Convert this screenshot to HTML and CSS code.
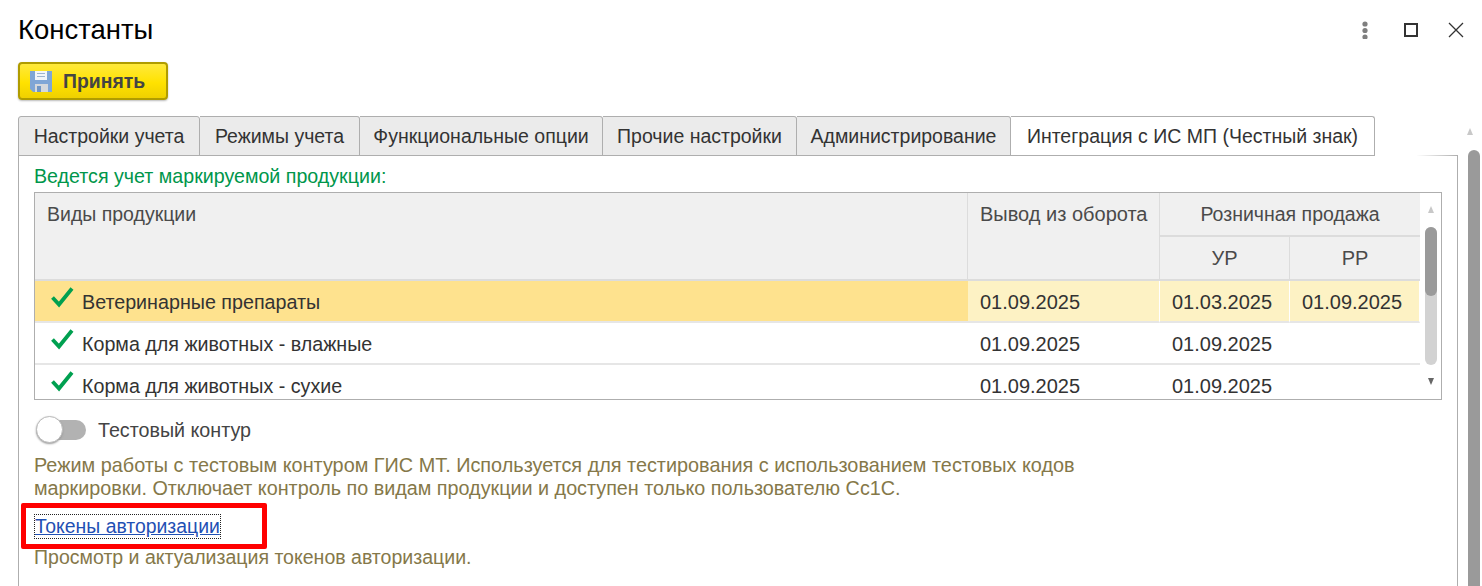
FILE: index.html
```html
<!DOCTYPE html>
<html lang="ru">
<head>
<meta charset="utf-8">
<title>Константы</title>
<link rel="stylesheet" href="styles.css">
</head>
<body>
<div class="window">
  <header class="titlebar">
    <h1 class="title">Константы</h1>
    <div class="controls">
      <svg class="ctl" width="8" height="18" viewBox="0 0 8 18"><circle cx="4" cy="3" r="2.600" fill="#7f7f7f"/><circle cx="4" cy="9.500" r="2.600" fill="#7f7f7f"/><circle cx="4" cy="16" r="2.600" fill="#7f7f7f"/></svg>
      <svg class="ctl" width="14" height="14" viewBox="0 0 14 14"><rect x="1" y="1" width="12" height="12" fill="none" stroke="#333" stroke-width="2"/></svg>
      <svg class="ctl" width="16" height="16" viewBox="0 0 16 16"><path d="M1 1L15 15M15 1L1 15" fill="none" stroke="#333" stroke-width="1.300"/></svg>
    </div>
  </header>
  <div class="toolbar">
    <button class="accept" type="button">
      <svg width="22" height="22" viewBox="0 0 22 22"><path d="M0 1h22v21H3l-3-3z" fill="#7fa6d6"/><rect x="5" y="1" width="12" height="9" fill="#f2f5f9"/><path d="M7 3.500h8M7 6.500h8" stroke="#9db4cf" stroke-width="1"/><rect x="5" y="14" width="13" height="8" fill="#d4d8dc"/><rect x="7" y="16" width="4" height="6" fill="#6f96c6"/></svg>
      <span>Принять</span>
    </button>
  </div>
  <nav class="tabs">
    <div class="tab w1">Настройки учета</div>
    <div class="tab w2">Режимы учета</div>
    <div class="tab w3">Функциональные опции</div>
    <div class="tab w4">Прочие настройки</div>
    <div class="tab w5">Администрирование</div>
    <div class="tab active">Интеграция с ИС МП (Честный знак)</div>
  </nav>
  <main class="panel">
    <div class="heading">Ведется учет маркируемой продукции:</div>
    <div class="table">
      <div class="grid">
        <div class="th c-name">Виды продукции</div>
        <div class="th c-out">Вывод из оборота</div>
        <div class="th c-retail">Розничная продажа</div>
        <div class="th sub">УР</div>
        <div class="th sub sub2">РР</div>

        <div class="td name sel">
          <svg class="check" width="24" height="22" viewBox="0 0 24 22"><path d="M2.500 11.500L9 18.500L22 2.500" fill="none" stroke="#00a050" stroke-width="3.800"/></svg>Ветеринарные препараты</div>
        <div class="td sel2">01.09.2025</div>
        <div class="td sel2">01.03.2025</div>
        <div class="td sel2">01.09.2025</div>

        <div class="td name">
          <svg class="check" width="24" height="22" viewBox="0 0 24 22"><path d="M2.500 11.500L9 18.500L22 2.500" fill="none" stroke="#00a050" stroke-width="3.800"/></svg>Корма для животных - влажные</div>
        <div class="td">01.09.2025</div>
        <div class="td">01.09.2025</div>
        <div class="td"></div>

        <div class="td name">
          <svg class="check" width="24" height="22" viewBox="0 0 24 22"><path d="M2.500 11.500L9 18.500L22 2.500" fill="none" stroke="#00a050" stroke-width="3.800"/></svg>Корма для животных - сухие</div>
        <div class="td">01.09.2025</div>
        <div class="td">01.09.2025</div>
        <div class="td"></div>
      </div>
      <div class="tscroll">
        <div class="arrow up"></div>
        <div class="ttrack"><div class="tthumb"></div></div>
        <div class="arrow down"></div>
      </div>
    </div>
    <div class="toggle-row">
      <div class="toggle"><div class="knob"></div></div>
      <span class="toggle-label">Тестовый контур</span>
    </div>
    <p class="note">Режим работы с тестовым контуром ГИС МТ. Используется для тестирования с использованием тестовых кодов<br><span class="line2">маркировки. Отключает контроль по видам продукции и доступен только пользователю Cc1C.</span></p>
    <div class="link-row"><a class="link" href="#">Токены авторизации</a><div class="highlight"></div></div>
    <p class="note note2">Просмотр и актуализация токенов авторизации.</p>
  </main>
</div>
<aside class="pagescroll">
  <div class="arrow up"></div>
  <div class="pthumb"></div>
</aside>
</body>
</html>
```

FILE: styles.css
```css
* { box-sizing: border-box; }
html, body { margin: 0; height: 586px; overflow: hidden; background: #fff; }
body {
  display: flex;
  font-family: "Liberation Sans", Arial, sans-serif;
  font-size: 19.7px;
  color: #333;
}
.window { width: 1458px; padding-left: 18px; flex: none; }
.titlebar { height: 62px; display: flex; justify-content: space-between; align-items: flex-start; }
.title { margin: 14px 0 0; font-size: 27.5px; line-height: 32px; font-weight: 400; color: #000; }
.controls { display: flex; align-items: center; margin: 21px -6px 0 0; }
.ctl { display: block; }
.ctl:nth-child(1) { margin-right: 35px; }
.ctl:nth-child(2) { margin-right: 30px; }
.toolbar { height: 54px; }
.accept {
  width: 150px; height: 38px; padding: 0 0 0 10px;
  display: flex; align-items: center; gap: 11px;
  border: 2px solid #b09c00; border-radius: 4px;
  background: linear-gradient(#ffe93c, #ffe200 55%, #efd000);
  box-shadow: 0 1px 2px #bbb;
  font: 700 19.4px "Liberation Sans", Arial, sans-serif; color: #444;
}
.tabs { display: flex; height: 40px; }
.tab {
  height: 40px; padding-top: 8px; text-align: center;
  border: 1px solid #aeaeae; border-left: 0;
  border-radius: 0 3px 0 0;
  background: #ebebeb; line-height: 22px; white-space: nowrap;
  font-size: 19.5px;
}
.w1 { width: 182px; border-left: 1px solid #aeaeae; border-radius: 3px 3px 0 0; }
.w2 { width: 160px; }
.w3 { width: 243px; }
.w4 { width: 194px; }
.w5 { width: 214px; }
.active { width: 364px; background: #fff; border-bottom: 0; }
.panel {
  width: 1440px; height: 431px; margin-top: -1px; padding: 9px 15px 0 15px;
  border: 1px solid #aeaeae; border-bottom: 0;
  clip-path: polygon(0 0, 1356px 0, 1356px 2px, 100% 0, 100% 100%, 0 100%);
}
.heading { color: #00964b; line-height: 22px; height: 27px; font-size: 19.65px; }
.table {
  width: 1408px; height: 208px; display: flex; overflow: hidden;
  border: 1px solid #aeaeae;
}
.grid {
  width: 1385px; flex: none; display: grid;
  grid-template-columns: 933px 192px 130px 130px;
  grid-template-rows: 44px 44px 42px 42px 42px;
  font-size: 20px;
}
.th { background: #f0f0f0; color: #4a4a4a; padding-top: 10px; line-height: 22px; border-right: 1px solid #dcdcdc; border-bottom: 2px solid #dcdcdc; }
.c-name { grid-row: span 2; padding-left: 12px; font-size: 19.5px; }
.c-out { grid-row: span 2; padding-left: 12px; }
.c-retail { grid-column: span 2; text-align: center; border-right: 0; font-size: 19.5px; }
.sub { text-align: center; }
.sub2 { border-right: 0; }
.td { padding: 10px 0 0 12px; line-height: 22px; border-bottom: 2px solid #e6e6e6; color: #333; white-space: nowrap; }
.name { display: flex; padding-left: 15px; font-size: 19.7px; }
.check { flex: none; margin: -5px 8px 0 0; }
.sel { background: #fee28e; }
.sel2 { background: #fdf2c4; border-right: 1px solid #fff; }
.tscroll { flex: 1; display: flex; flex-direction: column; align-items: center; padding-top: 13px; }
.arrow { width: 0; height: 0; border-left: 3.500px solid transparent; border-right: 3.500px solid transparent; }
.up { border-bottom: 7px solid #c8c8c8; }
.down { border-top: 7px solid #666; margin-top: 13px; }
.ttrack { width: 12px; height: 138px; margin-top: 14px; background: #d2d2d2; border-radius: 6px; }
.tthumb { height: 69px; background: #9a9a9a; border-radius: 6px; }
.toggle-row { display: flex; align-items: center; height: 30px; margin-top: 15px; padding-left: 2px; }
.toggle { width: 50px; height: 20px; background: #b2b2b2; border-radius: 10px; margin-right: 12px; position: relative; }
.knob { position: absolute; left: 0; top: -4px; width: 27px; height: 27px; background: #fff; border: 1px solid #bbb; border-radius: 50%; box-shadow: 0 1px 2px #999; }
.toggle-label { color: #444; }
.note { margin: 9px 0 0; line-height: 23px; color: #857849; font-size: 19.85px; }
.line2 { font-size: 19.78px; }
.note2 { margin-top: 7px; font-size: 19.55px; }
.link-row { position: relative; height: 24px; margin-top: 15px; padding-left: 1px; }
.link { color: #1f50b4; line-height: 22px; outline: 1px dotted #222; outline-offset: 0; display: inline-block; height: 23px; text-decoration: underline; font-size: 19.4px; }
.highlight { position: absolute; left: -13px; top: -12px; width: 246px; height: 46px; border: 5px solid #f00; border-radius: 2px; }
.pagescroll { flex: 1; position: relative; padding-top: 128px; display: flex; flex-direction: column; align-items: center; }
.pthumb { position: absolute; top: 150px; left: 10px; width: 12px; height: 440px; background: #9a9a9a; border-radius: 6px 6px 0 0; }
```
